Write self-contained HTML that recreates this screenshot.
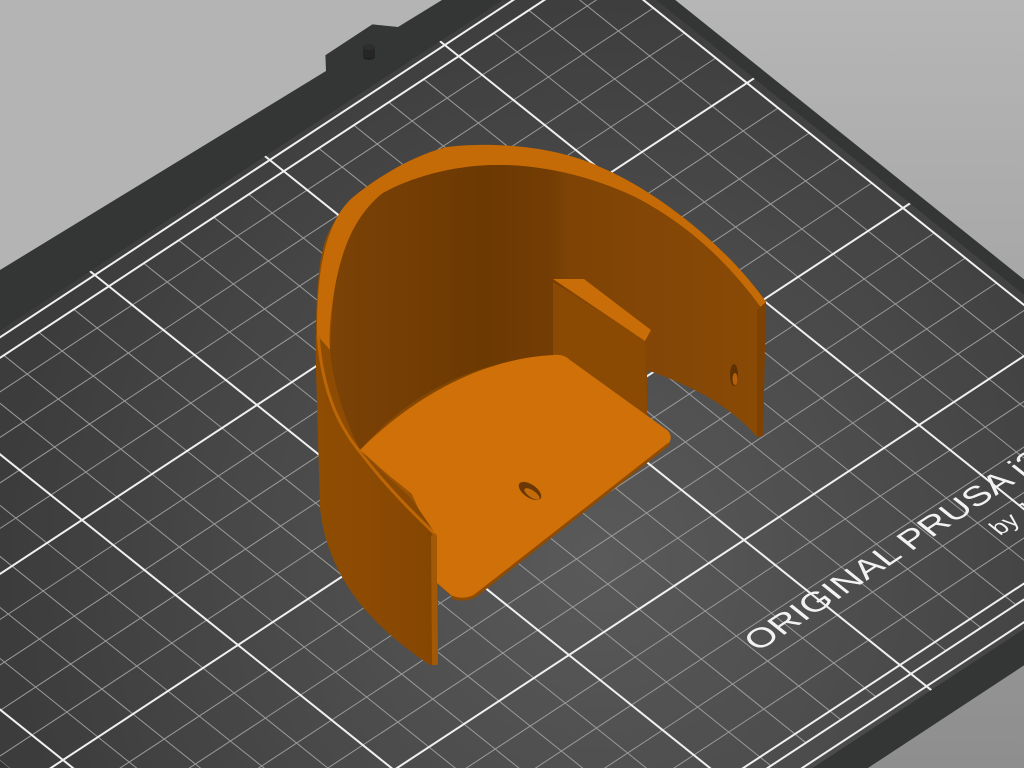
<!DOCTYPE html>
<html><head><meta charset="utf-8"><style>
html,body{margin:0;padding:0;width:1024px;height:768px;overflow:hidden;background:#b4b4b4}
svg{display:block}
</style></head><body>
<svg id="s" width="1024" height="768" viewBox="0 0 1024 768" xmlns="http://www.w3.org/2000/svg">
<defs>
<linearGradient id="bg" x1="0" y1="0" x2="0" y2="1"><stop offset="0" stop-color="#b6b6b6"/><stop offset="1" stop-color="#8e8e8e"/></linearGradient>
<radialGradient id="surf" cx="600" cy="560" r="600" gradientUnits="userSpaceOnUse"><stop offset="0" stop-color="#5a5a5a"/><stop offset="1" stop-color="#3c3c3c"/></radialGradient>
<linearGradient id="inner" x1="330" y1="0" x2="765" y2="0" gradientUnits="userSpaceOnUse">
<stop offset="0" stop-color="#7c4206"/><stop offset="0.35" stop-color="#6c3903"/><stop offset="0.5" stop-color="#733c04"/><stop offset="0.55" stop-color="#7e4305"/><stop offset="1" stop-color="#8a4a06"/></linearGradient>
<linearGradient id="front" x1="320" y1="0" x2="437" y2="0" gradientUnits="userSpaceOnUse">
<stop offset="0" stop-color="#8f4c03"/><stop offset="0.6" stop-color="#8a4903"/><stop offset="1" stop-color="#844603"/></linearGradient>
<clipPath id="cs"><polygon id="cp"/></clipPath>
<clipPath id="all"><rect width="1024" height="768"/></clipPath>
</defs>
<g clip-path="url(#all)">
<rect width="1024" height="768" fill="url(#bg)"/>
<polygon id="frame" fill="#343535"/>
<polygon points="0,270 326,71 325,45 360,23 398,27 442,0 0,0" fill="#b4b4b4"/>
<polygon id="surface" fill="url(#surf)"/>
<g id="grid" clip-path="url(#cs)"></g>
<ellipse cx="369" cy="57" rx="6" ry="3" fill="#222"/>
<rect x="363" y="47" width="12" height="10" fill="#262626"/>
<ellipse cx="369" cy="47" rx="6" ry="3" fill="#2e2e2e"/>

<g id="txt" fill="#f2f2f2" font-family="Liberation Sans, sans-serif">
<text transform="matrix(0.836,-0.549,0.780,0.625,758,652)" font-size="32" textLength="345" lengthAdjust="spacingAndGlyphs">ORIGINAL PRUSA i3</text>
<text transform="matrix(0.836,-0.549,0.780,0.625,1000,536)" font-size="24">by Josef Prusa</text>
</g>

<path d="M447,147 C500,141 560,148 600,167 C660,192 730,250 766,302 L763,436 L757,437 C730,405 690,385 647,370 L647,420 L669,436 L669,444 L475,596 C468,600 458,600 452,597 L438,584 L438,665 L430,665 C400,645 370,620 350,590 C330,560 322,530 320,507 L316,370 C315,300 318,250 330,230 C340,210 352,198 352,198 C380,175 415,155 447,147 Z" fill="url(#front)"/>
<path d="M317,335 C316,265 328,220 352,198 C380,175 415,155 447,147 C500,141 560,148 600,167 C660,192 730,250 766,302 L762,309 C730,265 690,225 633,196 C590,176 540,164 493,165 C450,166 410,178 383,193 C355,215 340,250 333,300 C330,320 329,335 330,350 Z" fill="#c46a06"/>
<path d="M333,300 C340,250 355,215 383,193 C410,178 450,166 493,165 C540,164 590,176 633,196 C690,225 730,265 762,309 L757,437 C730,405 690,385 647,370 L647,420 L553,357 C500,357 420,380 360,450 C345,420 333,385 330,350 Z" fill="url(#inner)"/>
<polygon points="757,310 766,302 763,436 757,437" fill="#7c4204"/>
<ellipse cx="734" cy="375" rx="4" ry="11" fill="#5e3203"/>
<ellipse cx="735" cy="379" rx="2.5" ry="6" fill="#b5600a"/>
<path d="M318,335 C322,390 338,425 360,452 C385,485 410,510 436,535" fill="none" stroke="#bd6606" stroke-width="3"/>
<polygon points="431,536 437,532 438,665 432,665" fill="#a35805"/>
<polygon points="553,282 645,340 647,425 553,362" fill="#8b4a04"/>
<polygon points="553,279 584,279 651,330 645,341" fill="#c86d07"/>
<path d="M360,450 C420,390 490,358 553,355 C560,354 566,356 570,360 L667,430 C672,434 672,441 667,445 L475,594 C468,599 458,599 452,596 L437,583 L437,536 L418,508 L412,496 Z" fill="#cf7108"/>
<path d="M669,444 L475,596 C468,600 458,600 452,597" fill="none" stroke="#8e4b03" stroke-width="3"/>
<polygon points="360,452 412,494 418,508 410,497" fill="#9a5204"/>
<ellipse cx="530" cy="491" rx="13" ry="6.5" transform="rotate(35 530 491)" fill="#6a3804"/>
<ellipse cx="532" cy="494" rx="9" ry="3.5" transform="rotate(35 532 494)" fill="#c26b08"/>
</g>
</svg>
<script>
function P(u,v){return [257-175*u+156*v,405+115*u+125*v];}
function pts(a){return a.map(function(p){return p.join(',');}).join(' ');}
var f=[P(2.3,-1.34),P(-2.9,-1.34),P(-2.9,3.36),P(2.3,3.36)];
document.getElementById('frame').setAttribute('points',pts(f));
var s=[P(2.2,-1.07),P(-2.84,-1.07),P(-2.84,3.2),P(2.2,3.2)];
document.getElementById('surface').setAttribute('points',pts(s));
document.getElementById('cp').setAttribute('points',pts(s));
var g='';
function L(a,b,c,w){g+='<line x1="'+a[0].toFixed(1)+'" y1="'+a[1].toFixed(1)+'" x2="'+b[0].toFixed(1)+'" y2="'+b[1].toFixed(1)+'" stroke="'+c+'" stroke-width="'+w+'"/>';}
for(var k=-14;k<=11;k++){var u=k*0.2;if(k%5==0)continue;L(P(u,-0.95),P(u,3.07),'#9a9a9a',1);}
for(var k=-4;k<=15;k++){var v=k*0.2;if(k%5==0)continue;L(P(-2.8,v),P(2.25,v),'#9a9a9a',1);}
for(var k=-2;k<=2;k++){L(P(k,-1.1),P(k,3.25),'#f0f0f0',2);}
for(var k=0;k<=3;k++){L(P(-2.9,k),P(2.3,k),'#f0f0f0',2);}
[-1.04,-0.95,3.07,3.17].forEach(function(v){L(P(-2.9,v),P(2.3,v),'#f0f0f0',2);});
L(P(-2.8,-1.1),P(-2.8,3.25),'#f0f0f0',2);
document.getElementById('grid').innerHTML=g;
</script>
</body></html>
